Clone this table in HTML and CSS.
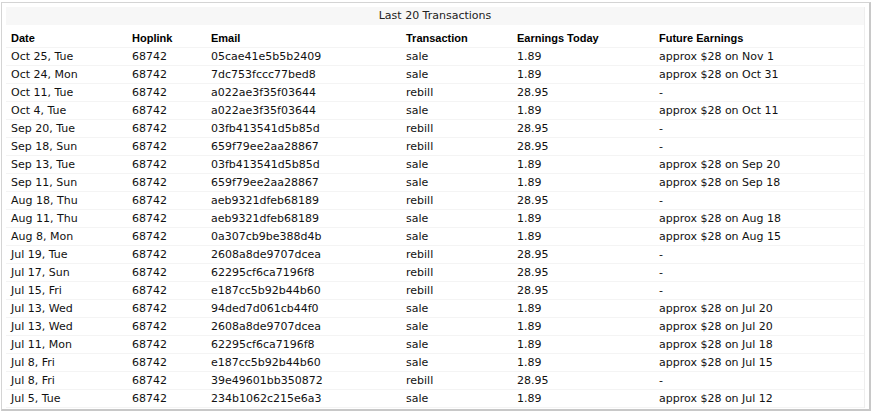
FILE: index.html
```html
<!DOCTYPE html>
<html>
<head>
<meta charset="utf-8">
<link rel="stylesheet" href="styles.css">
</head>
<body>
<div class="frame">
  <div class="inner">
    <div class="title">Last 20 Transactions</div>
    <table class="tx">
      <colgroup>
        <col class="c-date"><col class="c-hop"><col class="c-email"><col class="c-type"><col class="c-earn"><col class="c-future">
      </colgroup>
      <thead>
        <tr><th>Date</th><th>Hoplink</th><th>Email</th><th>Transaction</th><th>Earnings Today</th><th>Future Earnings</th></tr>
      </thead>
      <tbody>
        <tr><td>Oct 25, Tue</td><td>68742</td><td>05cae41e5b5b2409</td><td>sale</td><td>1.89</td><td>approx $28 on Nov 1</td></tr>
        <tr><td>Oct 24, Mon</td><td>68742</td><td>7dc753fccc77bed8</td><td>sale</td><td>1.89</td><td>approx $28 on Oct 31</td></tr>
        <tr><td>Oct 11, Tue</td><td>68742</td><td>a022ae3f35f03644</td><td>rebill</td><td>28.95</td><td>-</td></tr>
        <tr><td>Oct 4, Tue</td><td>68742</td><td>a022ae3f35f03644</td><td>sale</td><td>1.89</td><td>approx $28 on Oct 11</td></tr>
        <tr><td>Sep 20, Tue</td><td>68742</td><td>03fb413541d5b85d</td><td>rebill</td><td>28.95</td><td>-</td></tr>
        <tr><td>Sep 18, Sun</td><td>68742</td><td>659f79ee2aa28867</td><td>rebill</td><td>28.95</td><td>-</td></tr>
        <tr><td>Sep 13, Tue</td><td>68742</td><td>03fb413541d5b85d</td><td>sale</td><td>1.89</td><td>approx $28 on Sep 20</td></tr>
        <tr><td>Sep 11, Sun</td><td>68742</td><td>659f79ee2aa28867</td><td>sale</td><td>1.89</td><td>approx $28 on Sep 18</td></tr>
        <tr><td>Aug 18, Thu</td><td>68742</td><td>aeb9321dfeb68189</td><td>rebill</td><td>28.95</td><td>-</td></tr>
        <tr><td>Aug 11, Thu</td><td>68742</td><td>aeb9321dfeb68189</td><td>sale</td><td>1.89</td><td>approx $28 on Aug 18</td></tr>
        <tr><td>Aug 8, Mon</td><td>68742</td><td>0a307cb9be388d4b</td><td>sale</td><td>1.89</td><td>approx $28 on Aug 15</td></tr>
        <tr><td>Jul 19, Tue</td><td>68742</td><td>2608a8de9707dcea</td><td>rebill</td><td>28.95</td><td>-</td></tr>
        <tr><td>Jul 17, Sun</td><td>68742</td><td>62295cf6ca7196f8</td><td>rebill</td><td>28.95</td><td>-</td></tr>
        <tr><td>Jul 15, Fri</td><td>68742</td><td>e187cc5b92b44b60</td><td>rebill</td><td>28.95</td><td>-</td></tr>
        <tr><td>Jul 13, Wed</td><td>68742</td><td>94ded7d061cb44f0</td><td>sale</td><td>1.89</td><td>approx $28 on Jul 20</td></tr>
        <tr><td>Jul 13, Wed</td><td>68742</td><td>2608a8de9707dcea</td><td>sale</td><td>1.89</td><td>approx $28 on Jul 20</td></tr>
        <tr><td>Jul 11, Mon</td><td>68742</td><td>62295cf6ca7196f8</td><td>sale</td><td>1.89</td><td>approx $28 on Jul 18</td></tr>
        <tr><td>Jul 8, Fri</td><td>68742</td><td>e187cc5b92b44b60</td><td>sale</td><td>1.89</td><td>approx $28 on Jul 15</td></tr>
        <tr><td>Jul 8, Fri</td><td>68742</td><td>39e49601bb350872</td><td>rebill</td><td>28.95</td><td>-</td></tr>
        <tr><td>Jul 5, Tue</td><td>68742</td><td>234b1062c215e6a3</td><td>sale</td><td>1.89</td><td>approx $28 on Jul 12</td></tr>
      </tbody>
    </table>
  </div>
</div>
</body>
</html>
```

FILE: styles.css
```css
html, body {
  margin: 0;
  padding: 0;
  background: #fff;
}
body {
  font-family: "DejaVu Sans", Verdana, sans-serif;
  font-size: 11px;
  color: #111;
}
.frame {
  margin: 2px 1px 0 1px;
  height: 409px;
  border-top: 1px solid #d4d4d4;
  border-left: 1px solid #d4d4d4;
  border-right: 2px solid #c8c8c8;
  border-bottom: 2px solid #c8c8c8;
  box-sizing: border-box;
  padding: 4px 4px 0 4px;
}
.inner {
  width: 858px;
  border-right: 1px solid #eeeeee;
}
.title {
  height: 18px;
  line-height: 18px;
  background: #f7f7f7;
  text-align: center;
  color: #222;
}
.tx {
  margin-top: 5px;
  width: 100%;
  border-collapse: collapse;
  table-layout: fixed;
}
.c-date { width: 121px; }
.c-hop { width: 79px; }
.c-email { width: 195px; }
.c-type { width: 111px; }
.c-earn { width: 142px; }
.tx th, .tx td {
  height: 17px;
  padding: 0 0 0 5px;
  text-align: left;
  white-space: nowrap;
  border-bottom: 1px solid #f4f4f4;
  line-height: 17px;
}
.tx th {
  font-family: "Liberation Sans", Arial, sans-serif;
  font-weight: bold;
  font-size: 11px;
  color: #000;
}
```
